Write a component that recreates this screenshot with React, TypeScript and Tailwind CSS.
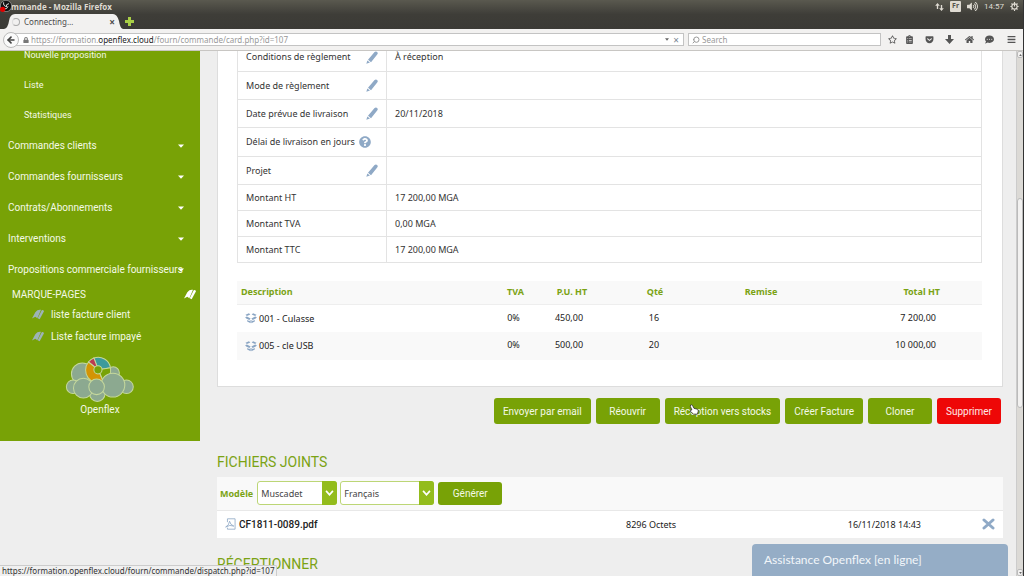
import React from "react";
import { FaRegStar, FaGetPocket, FaHome, FaCommentDots, FaBars, FaLock, FaQuestionCircle, FaVolumeUp, FaClipboardList } from "react-icons/fa";
import { Search, ArrowLeft } from "lucide-react";

const Pencil = () => (
  <svg viewBox="0 0 36 38" className="h-[13px] w-3 shrink-0" fill="#8fa9c6" aria-hidden="true">
    <path d="M25 3 Q30 -1 34 3 Q37 6 33 11 L15 33 L6 26 Z M4 28 L12 34 L1 38 Z" />
  </svg>
);

const Bookmarks = ({ color }: { color: string }) => (
  <svg viewBox="0 0 36 32" className="h-[11px] w-3 shrink-0" fill={color} aria-hidden="true">
    <path d="M10 9 Q17 0 27 2 L16 27 L10 23 L0 28 Z" />
    <path d="M29 3 Q34 1 36 6 L23 30 L17 27 Z" />
  </svg>
);

const BoxIcon = () => (
  <svg viewBox="0 0 34 32" className="h-[11px] w-3 shrink-0" fill="#8ba6c4" aria-hidden="true">
    <path d="M1 5 L11 1 L15 4 L5 9 Z M33 5 L23 1 L19 4 L29 9 Z" />
    <path d="M0 12 L5 10 L16 16 L12 20 L3 16 Z M34 12 L29 10 L18 16 L22 20 L31 16 Z" />
    <path d="M6 20 L12 23 L16 20 V30 L6 25 Z M28 20 L22 23 L18 20 V30 L28 25 Z" />
  </svg>
);

const PdfIcon = () => (
  <svg viewBox="0 0 36 38" className="h-3 w-[11px] shrink-0" fill="none" stroke="#8ba6c4" strokeWidth="2.6" aria-hidden="true">
    <path d="M8 13 V2 H33 V36 H8 V31" />
    <path d="M2 29 Q13 24 15 10 Q17 22 29 26 Q16 20 2 29 Z" />
  </svg>
);

const CloudLogo = () => (
  <svg viewBox="195 257 206 140" className="h-12 w-[70px]" stroke="#c5d89c" strokeWidth="3" aria-hidden="true">
    <g fill="#8ca990">
      <circle cx="290" cy="370" r="23" />
      <circle cx="337" cy="309" r="18" />
      <circle cx="246" cy="312" r="32" />
      <circle cx="219" cy="350" r="20" />
      <circle cx="376" cy="350" r="20" />
    </g>
    <circle cx="293" cy="300" r="37" fill="#78a206" stroke="none" />
    <path d="M293 300 L280 265 A37 37 0 0 1 329 294 Z" fill="#3c9a9b" />
    <path d="M293 300 L264 277 A37 37 0 0 1 280 265 Z" fill="#bd3a50" />
    <path d="M293 300 L308 336 A38 38 0 0 1 264 277 Z" fill="#d39405" />
    <path d="M293 300 L329 294 A37 37 0 0 1 308 334 Z" fill="#78a206" />
    <circle cx="292" cy="300" r="12" fill="#78a206" />
    <g fill="#8ca990">
      <circle cx="249" cy="354" r="29" />
      <circle cx="336" cy="345" r="35" />
      <circle cx="288" cy="350" r="23" />
    </g>
  </svg>
);

const Caret = () => (
  <svg viewBox="0 0 6 4" className="h-1 w-1.5 shrink-0" fill="#fff" aria-hidden="true"><path d="M0 0.5H6L3 3.7Z" /></svg>
);

const menus = ["Commandes clients", "Commandes fournisseurs", "Contrats/Abonnements", "Interventions", "Propositions commerciale fournisseurs"];

const details: { label: string; value: string; h: string; icon?: "edit" | "help" }[] = [
  { label: "Conditions de règlement", value: "À réception", h: "h-5 [&>*]:pb-2", icon: "edit" },
  { label: "Mode de règlement", value: "", h: "h-[28px]", icon: "edit" },
  { label: "Date prévue de livraison", value: "20/11/2018", h: "h-[28px]", icon: "edit" },
  { label: "Délai de livraison en jours", value: "", h: "h-[29px]", icon: "help" },
  { label: "Projet", value: "", h: "h-[28px]", icon: "edit" },
  { label: "Montant HT", value: "17 200,00 MGA", h: "h-[26px]" },
  { label: "Montant TVA", value: "0,00 MGA", h: "h-[26px]" },
  { label: "Montant TTC", value: "17 200,00 MGA", h: "h-[26px]" },
];

const lines = [
  { name: "001 - Culasse", tva: "0%", price: "450,00", qty: "16", total: "7 200,00" },
  { name: "005 - cle USB", tva: "0%", price: "500,00", qty: "20", total: "10 000,00" },
];

const greenButton = "flex h-[26px] min-w-16 items-center justify-center rounded-[3px] bg-[#78a206] px-[9px] text-[#f4f9e6]";

function Pick({ label, value, width }: { label: string; value: string; width: string }) {
  return (
    <div className={`relative h-6 ${width}`}>
      <select aria-label={label} className="h-full w-full appearance-none rounded-[3px] border border-[#bcd676] bg-white pl-[3px] text-[9px] text-[#444]">
        <option>{value}</option>
      </select>
      <span className="pointer-events-none absolute inset-y-0 right-0 flex w-[15px] items-center justify-center rounded-r-[3px] bg-[#93bc1c]">
        <svg viewBox="0 0 10 7" className="h-[6px] w-[9px]" fill="none" stroke="#fff" strokeWidth="2"><path d="M1 1L5 5.5L9 1" /></svg>
      </span>
    </div>
  );
}

function BrowserChrome() {
  return (
    <header className="shrink-0 font-['Noto_Sans',sans-serif]">
      <div className="bg-linear-to-b from-[#5a594f] via-[#3e3d38] to-[#3b3a36]">
        <div className="relative flex h-[13px] items-center justify-between pr-1 pl-px text-[8px] text-[#dfdbd2]">
          <span className="font-['Open_Sans',sans-serif] font-bold">Commande - Mozilla Firefox</span>
          <svg viewBox="0 0 36 36" className="absolute top-0 left-0 size-3" aria-hidden="true">
            <circle cx="18" cy="18" r="17" fill="#111" stroke="#aaa" strokeWidth="2" />
            <path d="M11 7 Q9 18 20 20 M27 11 Q17 12 19 21 M12 27 Q22 28 24 19" fill="none" stroke="#ddd" strokeWidth="3" />
            <circle cx="8" cy="28" r="8" fill="#e00000" />
          </svg>
          <div className="flex items-center gap-[6px]">
            <svg viewBox="0 0 26 24" className="h-2 w-[9px]" fill="#dfdbd2"><path d="M7 0L14 8H9V18H5V8H0ZM19 24L12 16H17V6H21V16H26Z" /></svg>
            <span className="flex h-[11px] w-[11px] items-center justify-center rounded-[1px] bg-[#dfdbd2] text-[7px] font-bold text-[#55534c]">Fr</span>
            <FaVolumeUp className="size-[11px]" />
            <span className="font-['Roboto',sans-serif]">14:57</span>
            <svg viewBox="0 0 24 24" className="size-[9px]" fill="none" stroke="#dfdbd2" strokeWidth="3"><circle cx="12" cy="12" r="7" /><path d="M12 0V12M1 12H5M19 12H23M4 4L7 7M20 4L17 7M4 20L7 17M20 20L17 17M12 20V24" /></svg>
          </div>
        </div>
        <div className="flex h-4 items-end gap-1">
          <div className="relative ml-1 flex h-[15px] w-[119px] items-center">
            <svg viewBox="0 0 119 15" preserveAspectRatio="none" className="absolute inset-0 h-full w-full" fill="#f2f1f0" aria-hidden="true"><path d="M0 15Q4 14 5 7Q6 0 11 0H109Q113 0 115 7Q116 14 119 15Z" /></svg>
            <div className="relative flex w-full items-center pr-2 pl-2 text-[8px] text-[#4c4c4c]">
              <span className="mr-1 size-2 rounded-full border border-[#aaa] border-l-[#ddd]" />
              <span className="grow">Connecting…</span>
              <button aria-label="Fermer l’onglet" className="text-[10px] leading-none font-bold">×</button>
            </div>
          </div>
          <button aria-label="Nouvel onglet" className="mb-[3px] -ml-0.5"><svg viewBox="0 0 9 9" className="size-[9px]" fill="#a9cf46"><path d="M3 0H6V3H9V6H6V9H3V6H0V3H3Z" /></svg></button>
        </div>
      </div>
      <div className="flex h-[22px] items-center border-b border-[#c8c6c3] bg-[#f2f1f0] pr-[7px] pl-[3px] text-[8px] text-[#999]">
        <button aria-label="Précédent" className="z-10 -mr-2 flex size-4 shrink-0 items-center justify-center rounded-full border border-[#bbb] bg-[#fafafa] text-[#444]"><ArrowLeft className="size-[10px]" strokeWidth={4} /></button>
        <div className="flex h-[13px] grow items-center border border-[#c3c3c3] bg-white pr-1 pl-[11px]">
          <FaLock className="mr-[2px] size-[6px] text-[#777]" />
          <span className="grow">https://formation.<span className="text-[#222]">openflex.cloud</span>/fourn/commande/card.php?id=107</span>
          <svg viewBox="0 0 6 4" className="mr-1 h-[3px] w-1" fill="#666"><path d="M0 0H6L3 4Z" /></svg>
          <span className="text-[10px] leading-none text-[#7a8794]">×</span>
        </div>
        <div className="ml-1 flex h-[13px] w-[193px] items-center border border-[#c3c3c3] bg-white pl-[3px]">
          <Search className="mr-[2px] size-2 shrink-0 -scale-x-100" strokeWidth={3} />
          <input aria-label="Search" placeholder="Search" className="w-full bg-transparent outline-none placeholder:text-[#999]" />
        </div>
        <div className="ml-[7px] flex items-center gap-[11px] text-[#555]">
          <FaRegStar className="size-[9px]" />
          <FaClipboardList className="-ml-[3px] size-[9px]" />
          <FaGetPocket className="size-[9px]" />
          <svg viewBox="0 0 9 9" className="size-[9px]" fill="currentColor"><path d="M3 0H6V4H9L4.500 9L0 4H3Z" /></svg>
          <FaHome className="size-[9px]" />
          <FaCommentDots className="size-[9px]" />
          <FaBars className="ml-[2px] size-[9px]" />
        </div>
      </div>
    </header>
  );
}

function Sidebar() {
  return (
    <nav className="w-[200px] shrink-0 self-start bg-[#78a206] pb-6 font-['Roboto',sans-serif] text-[10px] text-[#f4f9e6]">
      <div className="text-[9px]">
        <a href="#nouvelle" className="block h-[19px] pl-6 leading-[9px]">Nouvelle proposition</a>
        <a href="#liste" className="block h-[30px] pl-6 leading-[30px]">Liste</a>
        <a href="#statistiques" className="block h-[30px] pl-6 leading-[30px]">Statistiques</a>
      </div>
      {menus.map((m) => (
        <button key={m} className="relative flex h-[31px] w-full items-center pl-2 text-left whitespace-nowrap">
          {m}
          <span className="absolute right-4"><Caret /></span>
        </button>
      ))}
      <div className="flex h-[19px] items-center justify-between pr-1 pl-3">
        <h2>MARQUE-PAGES</h2>
        <Bookmarks color="#ffffff" />
      </div>
      <a href="#facture-client" className="flex h-[21px] items-center gap-[7px] pl-8"><Bookmarks color="#9db3b8" />liste facture client</a>
      <a href="#facture-impaye" className="flex h-[22px] items-center gap-[7px] pl-8"><Bookmarks color="#9db3b8" />Liste facture impayé</a>
      <div className="flex flex-col items-center pt-2 leading-[14px]">
        <CloudLogo />
        Openflex
      </div>
    </nav>
  );
}

export default function App() {
  return (
    <div className="flex h-screen flex-col overflow-hidden border-r border-[#333] bg-[#eee]">
      <BrowserChrome />
      <div className="relative flex min-h-0 grow overflow-hidden font-['Noto_Sans',sans-serif] text-[9px] text-[#333]">
        <Sidebar />
        <main className="min-w-0 grow pr-[13px] pl-[17px]">
          <section className="border border-t-0 border-[#ddd] bg-white pr-5 pb-[26px] pl-[19px]">
            <table className="w-full border-collapse">
              <tbody>
                {details.map((d) => (
                  <tr key={d.label} className={`border-x border-b border-[#e3e3e3] ${d.h}`}>
                    <th scope="row" className="w-[149px] border-r border-[#e3e3e3] py-0 pr-2 pl-2 text-left font-normal">
                      <div className="flex h-3 items-center whitespace-nowrap">
                        <span>{d.label}</span>
                        {d.icon === "edit" && <button aria-label={`Modifier ${d.label}`} className="ml-auto"><Pencil /></button>}
                        {d.icon === "help" && <FaQuestionCircle className="ml-1 size-3 shrink-0 text-[#8fa9c6]" />}
                      </div>
                    </th>
                    <td className="py-0 pl-2 leading-3">{d.value}</td>
                  </tr>
                ))}
              </tbody>
            </table>
            <table className="mt-[18px] w-full table-fixed border-collapse text-[#222]">
              <thead>
                <tr className="h-[23px] border-b border-[#eee] bg-[#f9f9f9] text-[#7ba314]">
                  <th className="pb-0.5 pl-1 text-left">Description</th>
                  <th className="w-[53px] pb-0.5">TVA</th>
                  <th className="w-[60px] pb-0.5">P.U. HT</th>
                  <th className="w-[106px] pb-0.5">Qté</th>
                  <th className="w-[106px] pb-0.5">Remise</th>
                  <th className="w-[168px] pr-[42px] pb-0.5 text-right">Total HT</th>
                </tr>
              </thead>
              <tbody>
                {lines.map((l) => (
                  <tr key={l.name} className="h-7 text-center even:bg-[#f9f9f9]">
                    <td className="pl-2"><div className="flex items-center gap-0.5"><BoxIcon />{l.name}</div></td>
                    <td className="pr-1 pb-0.5">{l.tva}</td>
                    <td className="pr-1.5 pb-0.5">{l.price}</td>
                    <td className="pr-0.5 pb-0.5">{l.qty}</td>
                    <td></td>
                    <td className="pr-[46px] pb-0.5 text-right">{l.total}</td>
                  </tr>
                ))}
              </tbody>
            </table>
          </section>

          <div className="mt-[11px] flex justify-end gap-[5px] pr-0.5 font-['Roboto',sans-serif] text-[10px] whitespace-nowrap">
            <button className={greenButton}>Envoyer par email</button>
            <button className={greenButton}>Réouvrir</button>
            <button className={`relative ${greenButton}`}>
              Réception vers stocks
              <svg viewBox="0 0 24 28" className="absolute top-1.5 left-6 h-3 w-[10px]" fill="#fff" stroke="#333" strokeWidth="2" aria-hidden="true"><path d="M4 2Q7 0 9 4L12 10L20 12Q23 13 22 18L20 24H11L3 17Q2 13 7 14L3 5Z" /></svg>
            </button>
            <button className={greenButton}>Créer Facture</button>
            <button className={greenButton}>Cloner</button>
            <button className="flex h-[26px] min-w-16 items-center justify-center rounded-[3px] bg-[#ee0707] px-2 text-[#ffe7e7]">Supprimer</button>
          </div>

          <h2 className="mt-7 font-['Roboto',sans-serif] text-[14px] leading-5 text-[#7ba314]">FICHIERS JOINTS</h2>
          <table className="mt-[5px] w-full border-collapse bg-white text-[#222]">
            <thead>
              <tr className="h-[33px] border-b border-[#e8e8e8] bg-[#f9f9f9]">
                <th colSpan={4} className="p-0 pl-[3px] text-left">
                  <div className="flex items-center gap-1">
                    <span className="text-[#7ba314]">Modèle</span>
                    <div className="flex items-center gap-[3px] font-normal">
                      <Pick label="Modèle" value="Muscadet" width="w-20" />
                      <Pick label="Langue" value="Français" width="w-[94px]" />
                    </div>
                    <button className="h-[23px] w-16 rounded-[3px] bg-[#78a206] font-['Roboto',sans-serif] text-[10px] font-normal text-[#f4f9e6]">Générer</button>
                  </div>
                </th>
              </tr>
            </thead>
            <tbody>
              <tr className="h-7">
                <td className="w-1/2 p-0 pl-2"><a href="#CF1811-0089.pdf" className="flex items-center gap-[3px] font-['Roboto',sans-serif] text-[10px] font-medium"><PdfIcon />CF1811-0089.pdf</a></td>
                <td className="p-0 pl-4">8296 Octets</td>
                <td className="p-0 pr-[22px] text-right">16/11/2018 14:43</td>
                <td className="w-[60px] p-0 pr-2">
                  <button aria-label="Supprimer le fichier" className="ml-auto block"><svg viewBox="0 0 13 12" className="h-3 w-[13px]" stroke="#8fa9c6" strokeWidth="3" strokeLinecap="round"><path d="M2 2L11 10M11 2L2 10" /></svg></button>
                </td>
              </tr>
            </tbody>
          </table>
          <h2 className="mt-4 font-['Roboto',sans-serif] text-[14px] leading-5 text-[#7ba314]">RÉCEPTIONNER</h2>
        </main>
        <div className="flex w-[7px] shrink-0 flex-col items-center border-l border-[#ccc] bg-[#dcdad6] text-[#777]">
          <span className="flex h-[7px] w-full items-center justify-center rounded-[2px] border border-[#bbb] bg-[#f2f1f0]"><svg viewBox="0 0 4 3" className="h-[2px] w-[3px]" fill="#666"><path d="M0 3H4L2 0Z" /></svg></span>
          <span className="grow-[27]" />
          <span className="w-full grow-[40] rounded-[3px] border border-[#bbb] bg-[#f2f1f0]" />
          <span className="grow-[31]" />
          <span className="flex h-[7px] w-full items-center justify-center rounded-[2px] border border-[#bbb] bg-[#f2f1f0]"><svg viewBox="0 0 4 3" className="h-[2px] w-[3px]" fill="#666"><path d="M0 0H4L2 3Z" /></svg></span>
        </div>
        <button className="absolute right-[15px] bottom-0 h-8 w-[256px] rounded-t-[4px] bg-[#95adc6] pl-3 text-left font-['Lato',sans-serif] text-[12px] text-[#f2f6fa]">Assistance Openflex [en ligne]</button>
        <div className="absolute bottom-0 left-0 h-[11px] rounded-tr-[2px] border-t border-r border-[#ccc] bg-[#f0f0f0] pr-0.5 pl-0.5 text-[8px] leading-[10px] text-[#333]">https://formation.openflex.cloud/fourn/commande/dispatch.php?id=107</div>
      </div>
    </div>
  );
}
